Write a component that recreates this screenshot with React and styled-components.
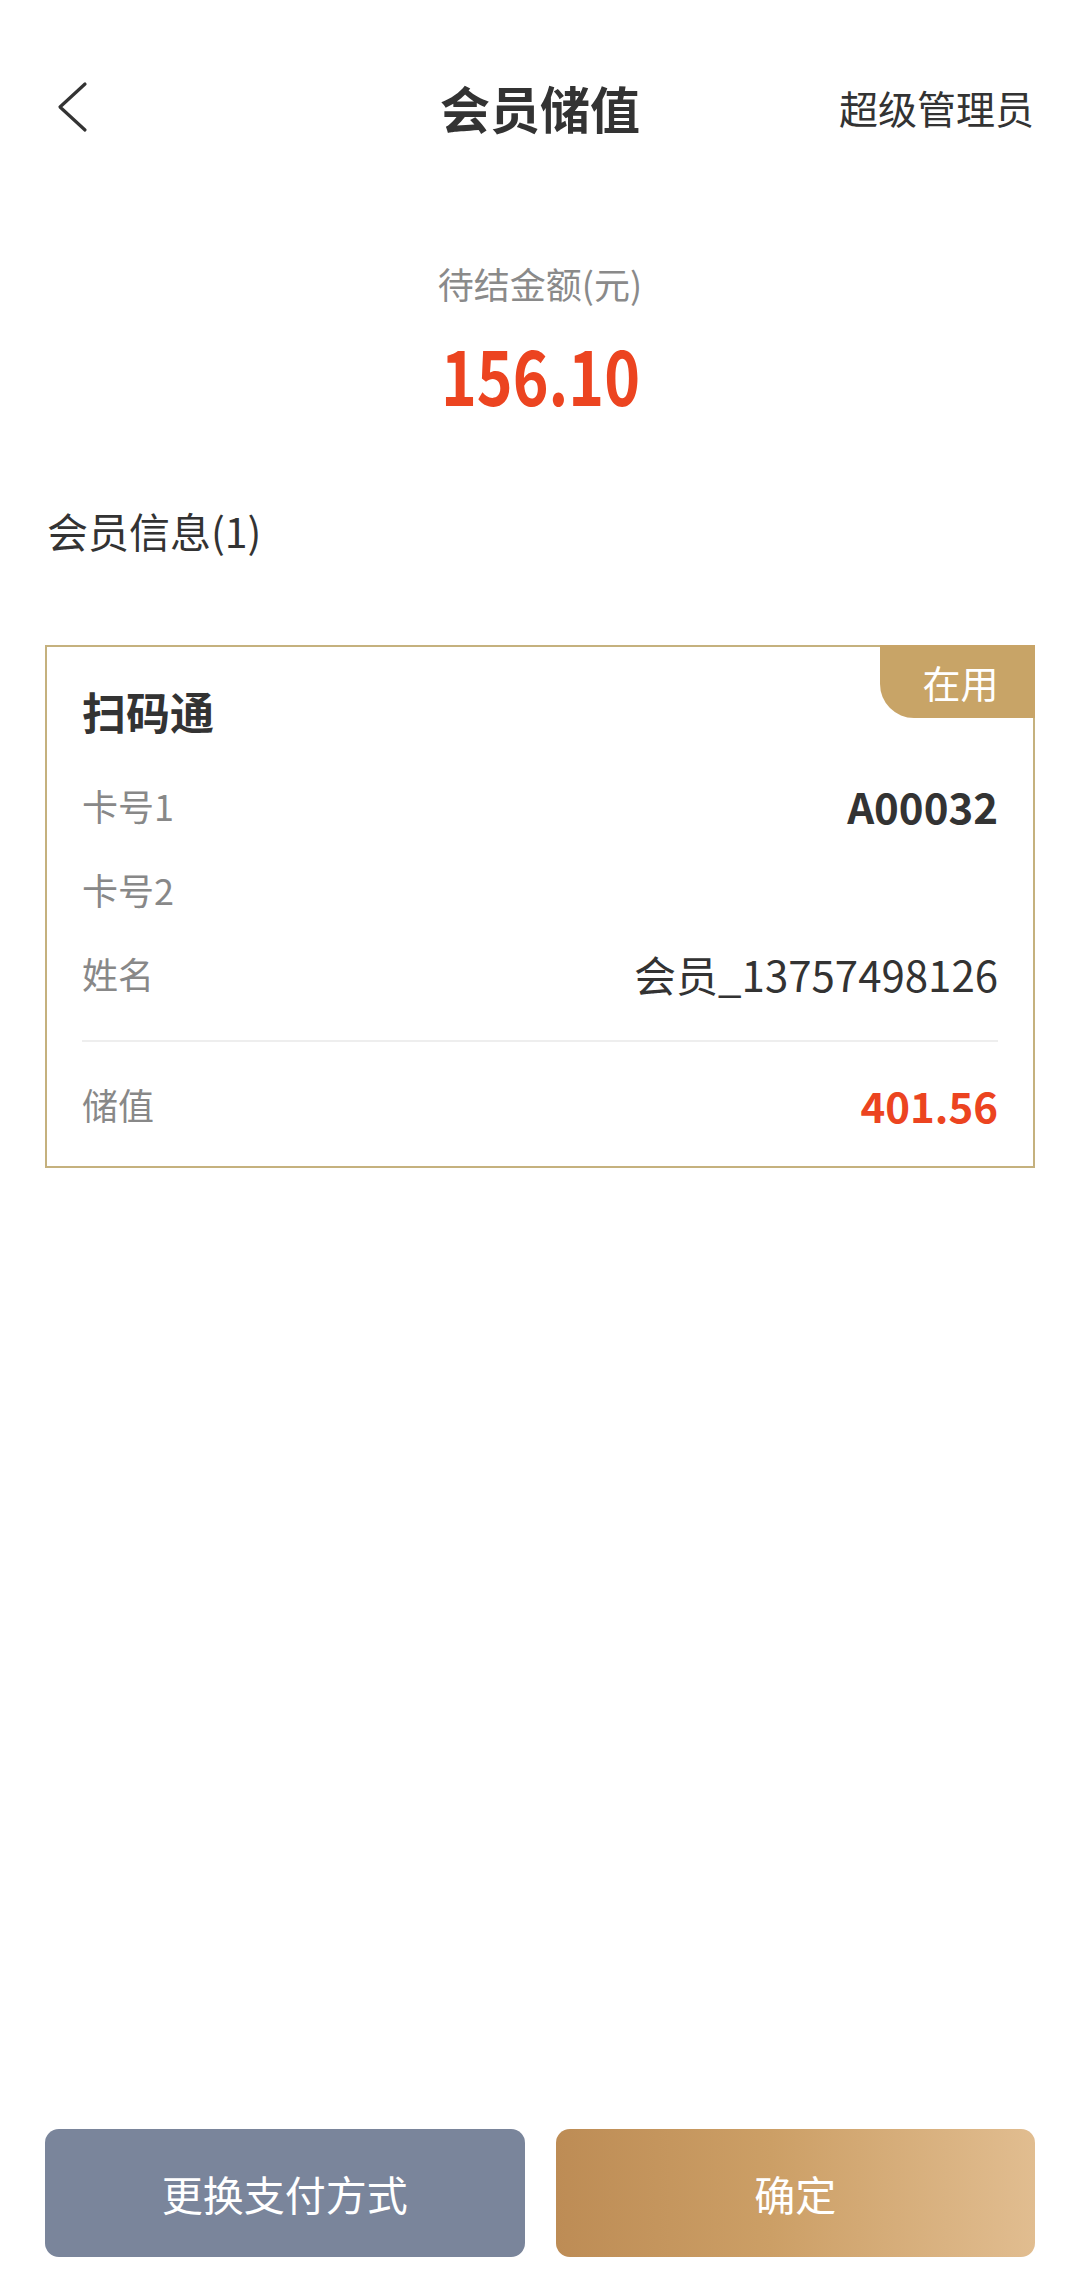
import React from "react";
import styled, { createGlobalStyle } from "styled-components";

const Global = createGlobalStyle`
  html, body { margin: 0; padding: 0; background: #ffffff; }
  body { font-family: "Noto Sans CJK SC", "Noto Sans", sans-serif; color: #333; }
  * { box-sizing: border-box; }
`;

const Page = styled.div`
  height: 100vh;
  display: flex;
  flex-direction: column;
  background: #fff;
`;

const Header = styled.header`
  margin-top: 47px;
  height: 120px;
  display: grid;
  grid-template-columns: 1fr auto 1fr;
  align-items: center;
  padding: 0 46px;
`;

const Back = styled.button`
  justify-self: start;
  margin-left: 10px;
  background: none;
  border: 0;
  padding: 0;
  width: 32px;
  height: 52px;
  display: flex;
  align-items: center;
`;

const Title = styled.h1`
  margin: 0;
  font-size: 50px;
  font-weight: 700;
  color: #333;
  line-height: 1;
`;

const Role = styled.div`
  justify-self: end;
  font-size: 39px;
  color: #333;
  line-height: 1;
`;

const Amount = styled.section`
  margin-top: 94px;
  display: flex;
  flex-direction: column;
  align-items: center;
`;

const AmountLabel = styled.div`
  font-size: 36px;
  line-height: 44px;
  color: #8a8a8a;
`;

const AmountValue = styled.div`
  margin-top: 28px;
  font-size: 76px;
  line-height: 80px;
  font-weight: 700;
  color: #ec4420;
  transform: scaleX(0.8);
`;

const SectionTitle = styled.div`
  margin: 92px 0 0 47px;
  font-size: 41px;
  line-height: 50px;
  color: #333;
`;

const Card = styled.div`
  position: relative;
  margin: 90px 45px 0;
  border: 2px solid #c5b17e;
  padding: 0 35px;
`;

const Badge = styled.div`
  position: absolute;
  top: -2px;
  right: -2px;
  width: 155px;
  height: 73px;
  background: #c8a467;
  border-bottom-left-radius: 34px;
  color: #fff;
  font-size: 38px;
  display: flex;
  align-items: center;
  justify-content: center;
  padding-left: 6px;
`;

const CardTitle = styled.div`
  padding-top: 34px;
  height: 116px;
  font-size: 44px;
  line-height: 60px;
  font-weight: 700;
  color: #333;
`;

const Row = styled.div`
  height: 84px;
  display: flex;
  align-items: center;
  justify-content: space-between;
`;

const Label = styled.span`
  font-size: 36px;
  color: #888;
`;

const Value = styled.span`
  font-size: 42px;
  font-weight: ${(p) => (p.$bold ? 700 : 400)};
  color: ${(p) => (p.$red ? "#ec4420" : "#333")};
`;

const Divider = styled.div`
  margin-top: 25px;
  height: 2px;
  background: #eeeeee;
`;

const Footer = styled.div`
  padding: 20px 0;
`;

const Spacer = styled.div`
  flex: 1;
`;

const Buttons = styled.div`
  display: grid;
  grid-template-columns: 1fr 1fr;
  gap: 31px;
  padding: 0 45px 38px;
`;

const Btn = styled.button`
  height: 128px;
  border: 0;
  border-radius: 14px;
  font-family: inherit;
  font-size: 41px;
  color: #fff;
  background: ${(p) =>
    p.$primary
      ? "linear-gradient(90deg, #bd8c55 0%, #cc9f66 45%, #e1bd90 100%)"
      : "#7a859b"};
`;

export default function App() {
  return (
    <Page>
      <Global />
      <Header>
        <Back aria-label="返回">
          <svg width="32" height="52" viewBox="0 0 32 52" fill="none">
            <path d="M29 3 L4 26 L29 49" stroke="#333" strokeWidth="3.2" strokeLinecap="round" strokeLinejoin="round" />
          </svg>
        </Back>
        <Title>会员储值</Title>
        <Role>超级管理员</Role>
      </Header>

      <Amount>
        <AmountLabel>待结金额(元)</AmountLabel>
        <AmountValue>156.10</AmountValue>
      </Amount>

      <SectionTitle>会员信息(1)</SectionTitle>

      <Card>
        <Badge>在用</Badge>
        <CardTitle>扫码通</CardTitle>
        <Row>
          <Label>卡号1</Label>
          <Value $bold>A00032</Value>
        </Row>
        <Row>
          <Label>卡号2</Label>
          <Value></Value>
        </Row>
        <Row>
          <Label>姓名</Label>
          <Value>会员_13757498126</Value>
        </Row>
        <Divider />
        <Footer>
          <Row>
            <Label>储值</Label>
            <Value $bold $red>401.56</Value>
          </Row>
        </Footer>
      </Card>

      <Spacer />
      <Buttons>
        <Btn>更换支付方式</Btn>
        <Btn $primary>确定</Btn>
      </Buttons>
    </Page>
  );
}
